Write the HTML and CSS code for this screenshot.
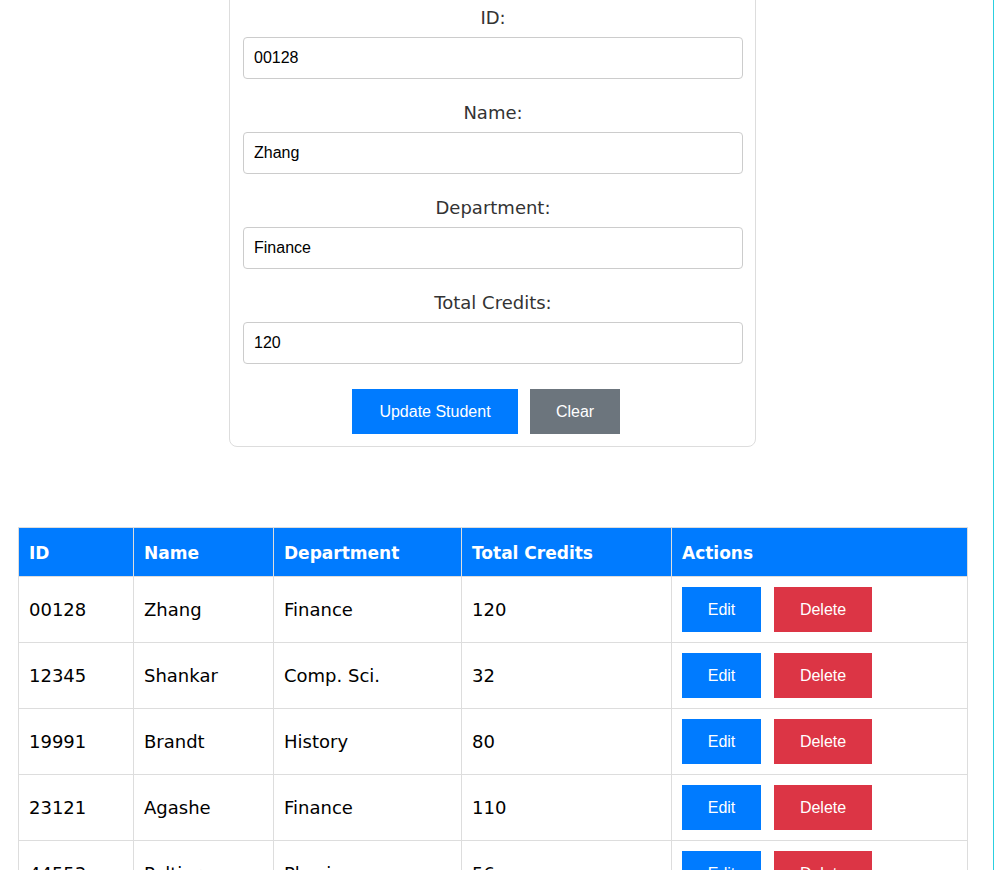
FILE: index.html
```html
<!DOCTYPE html>
<html lang="en">
<head>
<meta charset="utf-8">
<title>Student Management</title>
<link rel="stylesheet" href="styles.css">
</head>
<body>
<div class="page">
  <div class="container">
    <form class="card">
      <div class="group">
        <label class="label" for="sid">ID:</label>
        <input class="field" id="sid" type="text" value="00128">
      </div>
      <div class="group">
        <label class="label" for="sname">Name:</label>
        <input class="field" id="sname" type="text" value="Zhang">
      </div>
      <div class="group">
        <label class="label" for="sdept">Department:</label>
        <input class="field" id="sdept" type="text" value="Finance">
      </div>
      <div class="group">
        <label class="label" for="scred">Total Credits:</label>
        <input class="field" id="scred" type="text" value="120">
      </div>
      <div class="form-actions">
        <button type="button" class="btn btn-primary btn-update">Update Student</button>
        <button type="button" class="btn btn-secondary btn-clear">Clear</button>
      </div>
    </form>

    <table class="students">
      <colgroup>
        <col class="c-id"><col class="c-name"><col class="c-dept"><col class="c-cred"><col class="c-act">
      </colgroup>
      <thead>
        <tr><th>ID</th><th>Name</th><th>Department</th><th>Total Credits</th><th>Actions</th></tr>
      </thead>
      <tbody>
        <tr><td>00128</td><td>Zhang</td><td>Finance</td><td>120</td><td><div class="row-actions"><button class="btn btn-primary btn-edit">Edit</button><button class="btn btn-danger btn-delete">Delete</button></div></td></tr>
        <tr><td>12345</td><td>Shankar</td><td>Comp. Sci.</td><td>32</td><td><div class="row-actions"><button class="btn btn-primary btn-edit">Edit</button><button class="btn btn-danger btn-delete">Delete</button></div></td></tr>
        <tr><td>19991</td><td>Brandt</td><td>History</td><td>80</td><td><div class="row-actions"><button class="btn btn-primary btn-edit">Edit</button><button class="btn btn-danger btn-delete">Delete</button></div></td></tr>
        <tr><td>23121</td><td>Agashe</td><td>Finance</td><td>110</td><td><div class="row-actions"><button class="btn btn-primary btn-edit">Edit</button><button class="btn btn-danger btn-delete">Delete</button></div></td></tr>
        <tr><td>44553</td><td>Peltier</td><td>Physics</td><td>56</td><td><div class="row-actions"><button class="btn btn-primary btn-edit">Edit</button><button class="btn btn-danger btn-delete">Delete</button></div></td></tr>
        <tr><td>45678</td><td>Levy</td><td>Physics</td><td>46</td><td><div class="row-actions"><button class="btn btn-primary btn-edit">Edit</button><button class="btn btn-danger btn-delete">Delete</button></div></td></tr>
        <tr><td>54321</td><td>Williams</td><td>Comp. Sci.</td><td>54</td><td><div class="row-actions"><button class="btn btn-primary btn-edit">Edit</button><button class="btn btn-danger btn-delete">Delete</button></div></td></tr>
      </tbody>
    </table>
  </div>
</div>
</body>
</html>
```
FILE: styles.css
```css
html, body {
  margin: 0;
  padding: 0;
  background: #ffffff;
}

.page {
  width: 994px;
  box-sizing: border-box;
  border-right: 1px solid #2ccfe0;
  min-height: 100vh;
  font-family: "Comic Sans MS", "DejaVu Sans", sans-serif;
  overflow: hidden;
}

.container {
  width: 949px;
  margin: 0 18px;
  padding-bottom: 40px;
}

.card {
  width: 500px;
  margin: -16px auto 0;
  padding: 20px 12px 12px 13px;
  border: 1px solid #dddddd;
  border-radius: 8px;
  background: #ffffff;
}

.group {
  margin-bottom: 21px;
}

.label {
  display: block;
  text-align: center;
  font-size: 18px;
  line-height: 25px;
  color: #333333;
  margin-bottom: 7px;
}

.field {
  display: block;
  width: 500px;
  height: 42px;
  box-sizing: border-box;
  padding: 0 10px;
  border: 1px solid #cccccc;
  border-radius: 4px;
  font-family: "Liberation Sans", Arial, sans-serif;
  font-size: 16px;
  color: #000000;
  background: #ffffff;
}

.form-actions {
  display: flex;
  justify-content: center;
  gap: 12px;
  padding-right: 14px;
  margin-top: 25px;
}

.btn {
  border: none;
  border-radius: 0;
  padding: 13px 0;
  font-family: "Liberation Sans", Arial, sans-serif;
  font-size: 16px;
  line-height: 19px;
  color: #ffffff;
  text-align: center;
  cursor: pointer;
}

.btn-primary { background: #007bff; }
.btn-secondary { background: #6c757d; }
.btn-danger { background: #dc3545; }

.btn-update { width: 166px; }
.btn-clear { width: 90px; }
.btn-edit { width: 79px; }
.btn-delete { width: 98px; }

.students {
  width: 949px;
  margin-top: 80px;
  border-collapse: collapse;
  table-layout: fixed;
}

.c-id { width: 115px; }
.c-name { width: 140px; }
.c-dept { width: 188px; }
.c-cred { width: 210px; }
.c-act { width: 296px; }

.students th,
.students td {
  border: 1px solid #dddddd;
  text-align: left;
  vertical-align: middle;
}

.students th {
  background: #007bff;
  color: #ffffff;
  font-weight: bold;
  font-size: 17px;
  line-height: 24px;
  padding: 13px 10px 11px;
}

.students td {
  color: #000000;
  font-size: 18px;
  line-height: 24px;
  padding: 10px 10px;
}

.row-actions {
  display: flex;
  gap: 13px;
}
```
